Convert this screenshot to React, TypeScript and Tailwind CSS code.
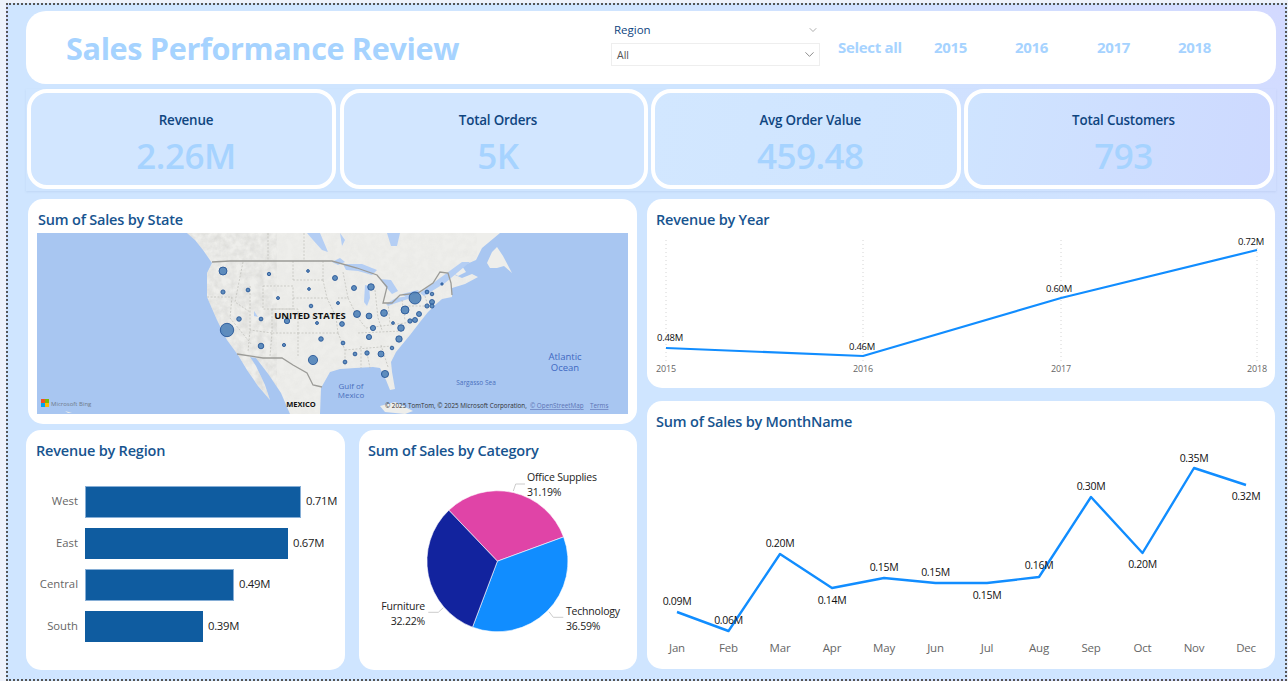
import { ChevronDown } from "lucide-react";

const kpis = [
  { label: "Revenue", value: "2.26M", fill: "bg-[#d2e6ff]", width: "w-[309px]" },
  { label: "Total Orders", value: "5K", fill: "bg-[#d2e6ff]", width: "w-[308px]" },
  { label: "Avg Order Value", value: "459.48", fill: "bg-[linear-gradient(100deg,#d2e7ff,#cfe4ff)]", width: "w-[309.5px]" },
  { label: "Total Customers", value: "793", fill: "bg-[linear-gradient(100deg,#cfe4ff,#cdd9ff)]", width: "w-[310px]" },
];

const years = [
  { label: "Select all", width: "w-[96px]" },
  { label: "2015", width: "w-[81px]" },
  { label: "2016", width: "w-[82px]" },
  { label: "2017", width: "w-[81px]" },
  { label: "2018", width: "w-[40px]" },
];

const regions = [
  { name: "West", value: "0.71M", bar: "w-[216px] border border-[#86aed6]" },
  { name: "East", value: "0.67M", bar: "w-[203px]" },
  { name: "Central", value: "0.49M", bar: "w-[149px] border border-[#86aed6]" },
  { name: "South", value: "0.39M", bar: "w-[118px]" },
];

const yearPts = [
  { x: 666, y: 348, year: "2015", label: "0.48M", lx: 670, ly: 337 },
  { x: 863, y: 356, year: "2016", label: "0.46M", lx: 862, ly: 346 },
  { x: 1061, y: 298, year: "2017", label: "0.60M", lx: 1059, ly: 288 },
  { x: 1257, y: 250, year: "2018", label: "0.72M", lx: 1251, ly: 241 },
];

const monthPts = [
  { m: "Jan", x: 677, y: 612, label: "0.09M", ly: 601 },
  { m: "Feb", x: 728.5, y: 631, label: "0.06M", ly: 620 },
  { m: "Mar", x: 780, y: 554, label: "0.20M", ly: 543 },
  { m: "Apr", x: 832, y: 588, label: "0.14M", ly: 600 },
  { m: "May", x: 884, y: 578, label: "0.15M", ly: 567 },
  { m: "Jun", x: 935.5, y: 583, label: "0.15M", ly: 572 },
  { m: "Jul", x: 987, y: 583, label: "0.15M", ly: 595 },
  { m: "Aug", x: 1039, y: 577, label: "0.16M", ly: 565 },
  { m: "Sep", x: 1091, y: 497, label: "0.30M", ly: 486 },
  { m: "Oct", x: 1142.5, y: 553, label: "0.20M", ly: 564 },
  { m: "Nov", x: 1194, y: 468, label: "0.35M", ly: 458 },
  { m: "Dec", x: 1246, y: 485, label: "0.32M", ly: 496 },
];

// x, y, r in page coordinates
const bubbles = [
  [223, 271, 4], [269, 274, 1.7], [308, 271, 1.4], [335, 278, 2.5], [223, 292, 2.1], [248, 290, 1.9],
  [309, 289, 1.4], [278, 298, 1.5], [311, 306, 1.8], [338, 303, 1.5], [239, 319, 2.3], [261, 319, 1.9],
  [287, 321, 2.7], [317, 323, 1.5], [227, 330, 6.7], [321, 339, 2.3], [261, 346, 2.8], [284, 345, 1.6],
  [313, 360, 4.6], [354, 288, 2.5], [371, 287, 3.3], [415, 298, 6], [427, 292, 1.9], [432, 294, 1.8],
  [442, 284, 1.2], [432, 302, 2.5], [427, 306, 2.1], [432, 306, 2.1], [405, 310, 4], [419, 314, 2.5],
  [384, 313, 3.4], [357, 314, 3.5], [369, 316, 2.9], [342, 324, 2.4], [410, 321, 2.2], [415, 320, 2.5],
  [393, 323, 1.4], [401, 328, 3.3], [373, 328, 2.6], [369, 337, 2.6], [399, 339, 3.2], [343, 343, 1.9],
  [392, 348, 1.8], [355, 354, 1.9], [367, 353, 2.2], [381, 354, 3], [345, 362, 1.9], [385, 374, 3.6],
];

const land =
  "M187 233 L195 240 L203 250 L212 263 L207 273 L207 297 L217 320 L227 340 L238 355 L247 370 L258 386 L270 400 L265 385 L256 366 L250 357 L256 358 L269 375 L281 393 L290 414 L320 414 L321 388 L330 372 L340 369 L355 368 L373 367 L380 368 L386 380 L390 390 L395 389 L392 372 L391 362 L396 352 L410 335 L420 322 L428 312 L435 305 L442 299 L452 297 L452 288 L465 284 L478 277 L472 274 L462 278 L455 275 L462 266 L476 260 L482 248 L500 233 Z";

const stateLines =
  "M268 233 L268 260 M304 233 L304 260 M293 261 L293 280 M293 280 L323 280 M323 261 L323 280 M293 298 L327 298 M263 286 L293 286 L293 309 L263 309 Z M272 309 L298 309 L298 333 L272 333 Z M298 333 L298 357 M272 333 L270 356 M298 317 L336 317 L338 333 M298 333 L338 333 M338 333 L345 350 L345 366 M327 298 L336 317 M323 280 L327 298 M343 272 L348 298 L338 298 M348 298 L358 318 L366 328 M366 328 L390 325 L412 322 M358 333 L402 331 M345 350 L392 346 M367 353 L370 368 M361 346 L361 368 M381 345 L388 367 M375 290 L378 318 L382 330 M388 303 L390 324 M402 300 L405 320 M405 306 L425 306 M425 296 L428 306 M243 262 L235 302 L250 312 M207 297 L232 297 M232 297 L230 318 L252 345 M250 286 L250 330 L248 352 M272 333 L250 330";

function Card({ title, className, titleClass, children }: { title: string; className: string; titleClass: string; children: React.ReactNode }) {
  return (
    <div className={`bg-white rounded-[15px] overflow-hidden ${className}`}>
      <h3 className={`pt-[10px] h-[34px] text-[14.5px] leading-[22px] font-semibold tracking-[-0.2px] text-[#17548f] ${titleClass}`}>{title}</h3>
      {children}
    </div>
  );
}

function MapChart() {
  return (
    <svg viewBox="37 233 591 181" className="block w-[591px] h-[181px] ml-[9px]">
      <defs>
        <clipPath id="land-clip">
          <path d={land} />
        </clipPath>
        <filter id="terrain" x="0" y="0" width="100%" height="100%">
          <feTurbulence type="fractalNoise" baseFrequency="0.14" numOctaves="3" seed="4" />
          <feColorMatrix values="0 0 0 0 0.6  0 0 0 0 0.6  0 0 0 0 0.58  1.3 0 0 0 -0.42" />
          <feGaussianBlur stdDeviation="0.5" />
        </filter>
      </defs>
      <rect x="37" y="233" width="591" height="181" fill="#a8c6f1" />
      <path d={land} fill="#eeeeeb" />
      <path d="M487 263 L492 252 L497 247 L503 256 L512 273 L504 266 L497 268 L490 268 Z M380 406 L395 402 L413 411 L405 414 L385 412 Z M65 411 L72 413 L68 413 Z M452 272 L462 266 L466 272 L458 276 Z" fill="#eeeeeb" />
      <g clipPath="url(#land-clip)">
        <rect x="187" y="233" width="90" height="181" filter="url(#terrain)" opacity="0.7" />
        <rect x="277" y="233" width="200" height="181" filter="url(#terrain)" opacity="0.15" />
      </g>
      {/* lakes */}
      <path
        d="M343 264 L362 264 L377 270 L372 275 L358 271 L346 270 Z M365 285 L369 286 L370 298 L367 306 L364 302 Z M380 279 L391 280 L398 291 L392 294 L385 286 Z M386 304 L396 298 L409 296 L408 299 L396 303 L388 306 Z M402 294 L418 290 L420 293 L406 297 Z M307 233 L320 233 L328 252 L322 250 L313 240 Z M387 233 L400 233 L397 246 L391 246 Z M332 262 L340 258 L345 262 L338 265 Z M420 293 L440 278 L462 262 L470 262 L445 283 L424 296 Z M340 233 L345 240 L342 246 Z M254 311 L258 317 L254 316 Z"
        fill="#b4cef4"
      />
      <path d={stateLines} fill="none" stroke="#bdbdb8" strokeWidth="0.7" strokeDasharray="2 1.5" />
      <path
        d="M212 262 L230 261 L332 261 L357 268 L377 275 L387 287 L383 303 L392 303 L400 295 L418 293 L433 283 L440 272 L448 273 L451 283 L452 295 M237 354 L263 358 L282 358 L293 365 L307 373 L313 385 L322 387"
        fill="none"
        stroke="#9b9b97"
        strokeWidth="1.3"
      />
      {bubbles.map(([x, y, r], i) => (
        <circle key={i} cx={x} cy={y} r={r} fill="#4f82b8" fillOpacity="0.9" stroke="#1d4e92" strokeWidth="0.8" />
      ))}
      <text x="310" y="319" textAnchor="middle" fontSize="9.5" fontWeight="700" fill="#111">UNITED STATES</text>
      <text x="301" y="407" textAnchor="middle" fontSize="7.5" fontWeight="700" fill="#111">MEXICO</text>
      <text x="351" y="389" textAnchor="middle" fontSize="8" fill="#4a70bd">Gulf of</text>
      <text x="351" y="398" textAnchor="middle" fontSize="8" fill="#4a70bd">Mexico</text>
      <text x="476" y="385" textAnchor="middle" fontSize="6.5" fill="#4a70bd">Sargasso Sea</text>
      <text x="565" y="360" textAnchor="middle" fontSize="9.5" fill="#3f68c2">Atlantic</text>
      <text x="565" y="371" textAnchor="middle" fontSize="9.5" fill="#3f68c2">Ocean</text>
      {/* bing mark */}
      <rect x="41" y="399" width="4" height="4" fill="#f25022" />
      <rect x="45" y="399" width="4" height="4" fill="#7fba00" />
      <rect x="41" y="403" width="4" height="4" fill="#00a4ef" />
      <rect x="45" y="403" width="4" height="4" fill="#ffb900" />
      <text x="51" y="405.5" fontSize="6" fill="#6f7b8a">Microsoft Bing</text>
      <text x="385" y="408" fontSize="6.3" fill="#333">© 2025 TomTom, © 2025 Microsoft Corporation,</text>
      <text x="530" y="408" fontSize="6.3" fill="#5d74b5" textDecoration="underline">© OpenStreetMap</text>
      <text x="590" y="408" fontSize="6.3" fill="#5d74b5" textDecoration="underline">Terms</text>
    </svg>
  );
}

function YearChart() {
  return (
    <svg viewBox="647 233 628 155" className="block w-[628px] h-[155px]">
      {yearPts.map((p) => (
        <line key={p.year} x1={p.x} x2={p.x} y1="240" y2="362" stroke="#d4d4d4" strokeDasharray="1 3" />
      ))}
      <polyline points={yearPts.map((p) => `${p.x},${p.y}`).join(" ")} fill="none" stroke="#118dff" strokeWidth="2.2" strokeLinejoin="round" />
      {yearPts.map((p) => (
        <g key={p.label}>
          <text x={p.lx} y={p.ly + 3.5} textAnchor="middle" fontSize="9.5" letterSpacing="-0.3" fill="#111">{p.label}</text>
          <text x={p.x} y="372" textAnchor="middle" fontSize="9" letterSpacing="-0.2" fill="#666">{p.year}</text>
        </g>
      ))}
    </svg>
  );
}

function MonthChart() {
  return (
    <svg viewBox="647 435 628 234" className="block w-[628px] h-[234px]">
      <polyline points={monthPts.map((p) => `${p.x},${p.y}`).join(" ")} fill="none" stroke="#118dff" strokeWidth="2.4" strokeLinejoin="round" />
      {monthPts.map((p) => (
        <g key={p.m}>
          <text x={p.x} y={p.ly + 4} textAnchor="middle" fontSize="10.5" letterSpacing="-0.3" fill="#111">{p.label}</text>
          <text x={p.x} y="652" textAnchor="middle" fontSize="11.5" letterSpacing="-0.2" fill="#666">{p.m}</text>
        </g>
      ))}
    </svg>
  );
}

function PieChart() {
  return (
    <svg viewBox="359 464 278 206" className="block w-[278px] h-[206px]">
      <g transform="translate(497.4 561.2)" stroke="#fff" strokeWidth="0.6">
        <path d="M0 0 L-48.6 -51 A70.5 70.5 0 0 1 66.2 -24.3 Z" fill="#e044a7" />
        <path d="M0 0 L66.2 -24.3 A70.5 70.5 0 0 1 -24.9 66 Z" fill="#118dff" />
        <path d="M0 0 L-24.9 66 A70.5 70.5 0 0 1 -48.6 -51 Z" fill="#12239e" />
      </g>
      <path d="M513.3 491 L515.7 484 L525 484 M443.3 607.7 L438.3 612.3 L428.3 612.3 M549 611.7 L553.3 617.3 L563.3 617.3" fill="none" stroke="#ccc" />
      <g fontSize="10.5" letterSpacing="-0.2" fill="#222">
        <text x="527" y="481">Office Supplies</text>
        <text x="527" y="496">31.19%</text>
        <text x="566" y="615">Technology</text>
        <text x="566" y="630">36.59%</text>
        <text x="425" y="610" textAnchor="end">Furniture</text>
        <text x="425" y="625" textAnchor="end">32.22%</text>
      </g>
    </svg>
  );
}

export default function App() {
  return (
    <div className="w-[1288px] h-[681px] overflow-hidden bg-[#eef2fb] font-['Open_Sans',sans-serif]">
      <div className="ml-[6px] mt-[3px] w-[1281px] h-[678px] border-2 border-dotted border-[#555] pl-[18px] pt-[6px] bg-[linear-gradient(to_top_right,#cfe5ff_0%,#cfe5ff_72%,#d3d9ff_100%)]">
        <header className="w-[1250px] h-[73px] bg-white rounded-[20px] flex items-center">
          <h1 className="ml-[40px] w-[545px] mt-[2px] text-[30.6px] leading-none font-bold tracking-[-0.35px] text-[#a6d3ff]">Sales Performance Review</h1>
          <div className="w-[209px] mb-[10px]">
            <div className="flex items-center justify-between pl-[3px] pr-[1px] h-[20px] text-[11.5px] text-[#0f4580]">
              Region
              <ChevronDown className="w-[12px] h-[12px] text-[#777]" strokeWidth={1.2} />
            </div>
            <div className="mt-[3px] h-[23px] border border-[#eee] flex items-center justify-between pl-[5px] pr-[2px] text-[10.5px] text-[#555]">
              <span className="pt-[3px]">All</span>
              <ChevronDown className="w-[15px] h-[15px] text-[#666]" strokeWidth={1.2} />
            </div>
          </div>
          <div className="ml-[18px] flex items-center text-[15px] font-bold tracking-[-0.3px] text-[#a6d3ff]">
            {years.map((y) => (
              <span key={y.label} className={y.width}>{y.label}</span>
            ))}
          </div>
        </header>

        <section className="mt-[5px] w-[1250px] h-[102px] flex gap-[3.5px] pl-[1px] shadow-[0_1px_2px_rgba(120,150,200,0.18)]">
          {kpis.map((k) => (
            <div key={k.label} className={`${k.width} h-[100px] border-4 border-white rounded-[20px] flex flex-col items-center pt-[16px] pl-[9px] ${k.fill}`}>
              <span className="text-[13.4px] leading-[22px] font-semibold tracking-[-0.2px] text-[#0f4580]">{k.label}</span>
              <span className="mt-[3px] text-[35px] leading-[44px] font-semibold tracking-[-0.5px] text-[#a6d3ff]">{k.value}</span>
            </div>
          ))}
        </section>

        <main className="mt-[8px] flex gap-[10px]">
          <div className="w-[611px]">
            <Card title="Sum of Sales by State" titleClass="pl-[10px]" className="ml-[2px] w-[609px] h-[225px]">
              <MapChart />
            </Card>
            <div className="mt-[6px] flex gap-[14px]">
              <Card title="Revenue by Region" titleClass="pl-[10px]" className="w-[319px] h-[240px]">
                <div className="mt-[22px] flex flex-col gap-[10px]">
                  {regions.map((r) => (
                    <div key={r.name} className="flex items-center h-[31.5px] text-[11.3px]">
                      <span className="w-[52px] text-right text-[#666]">{r.name}</span>
                      <div className={`ml-[7px] h-full bg-[#0f5ca0] ${r.bar}`} />
                      <span className="ml-[5px] text-[#222] tracking-[-0.3px]">{r.value}</span>
                    </div>
                  ))}
                </div>
              </Card>
              <Card title="Sum of Sales by Category" titleClass="pl-[9px]" className="w-[278px] h-[240px]">
                <PieChart />
              </Card>
            </div>
          </div>
          <div className="w-[628px]">
            <Card title="Revenue by Year" titleClass="pl-[9px]" className="h-[189px]">
              <YearChart />
            </Card>
            <Card title="Sum of Sales by MonthName" titleClass="pl-[9px]" className="mt-[13px] h-[268px]">
              <MonthChart />
            </Card>
          </div>
        </main>
      </div>
    </div>
  );
}
